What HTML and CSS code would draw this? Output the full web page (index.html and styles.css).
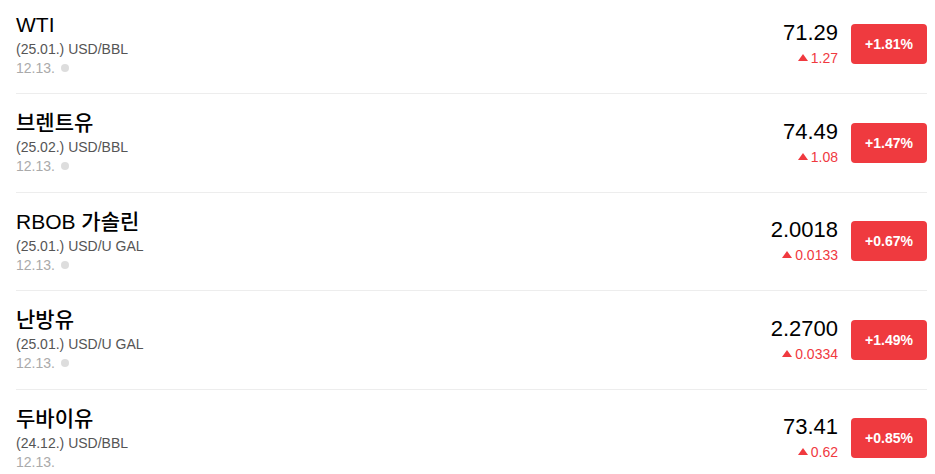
FILE: index.html
```html
<!DOCTYPE html>
<html lang="ko">
<head>
<meta charset="utf-8">
<title>원자재 시세</title>
<link rel="stylesheet" href="styles.css">
</head>
<body>
<ul class="list">
  <li class="row">
    <div class="info">
      <div class="title">WTI</div>
      <div class="sub">(25.01.) USD/BBL</div>
      <div class="date">12.13. <span class="dot"></span></div>
    </div>
    <div class="quote">
      <div class="price">71.29</div>
      <div class="change"><span class="tri"></span>1.27</div>
    </div>
    <div class="badge">+1.81%</div>
  </li>
  <li class="row">
    <div class="info">
      <div class="title"><span class="ko">브렌트유</span></div>
      <div class="sub">(25.02.) USD/BBL</div>
      <div class="date">12.13. <span class="dot"></span></div>
    </div>
    <div class="quote">
      <div class="price">74.49</div>
      <div class="change"><span class="tri"></span>1.08</div>
    </div>
    <div class="badge">+1.47%</div>
  </li>
  <li class="row">
    <div class="info">
      <div class="title">RBOB <span class="ko">가솔린</span></div>
      <div class="sub">(25.01.) USD/U GAL</div>
      <div class="date">12.13. <span class="dot"></span></div>
    </div>
    <div class="quote">
      <div class="price">2.0018</div>
      <div class="change"><span class="tri"></span>0.0133</div>
    </div>
    <div class="badge">+0.67%</div>
  </li>
  <li class="row">
    <div class="info">
      <div class="title"><span class="ko">난방유</span></div>
      <div class="sub">(25.01.) USD/U GAL</div>
      <div class="date">12.13. <span class="dot"></span></div>
    </div>
    <div class="quote">
      <div class="price">2.2700</div>
      <div class="change"><span class="tri"></span>0.0334</div>
    </div>
    <div class="badge">+1.49%</div>
  </li>
  <li class="row">
    <div class="info">
      <div class="title"><span class="ko">두바이유</span></div>
      <div class="sub">(24.12.) USD/BBL</div>
      <div class="date">12.13.</div>
    </div>
    <div class="quote">
      <div class="price">73.41</div>
      <div class="change"><span class="tri"></span>0.62</div>
    </div>
    <div class="badge">+0.85%</div>
  </li>
</ul>
</body>
</html>
```
FILE: styles.css
```css
html, body {
  margin: 0;
  padding: 0;
  background: #fff;
}
body {
  font-family: "Liberation Sans", "Noto Sans CJK KR", Arial, sans-serif;
  color: #111;
  overflow: hidden;
}
.list {
  list-style: none;
  margin: -4.5px 0 0 16px;
  padding: 0;
  width: 911px;
}
.row {
  display: flex;
  align-items: center;
  height: 97.5px;
  border-bottom: 1px solid #ededed;
}
.info {
  flex: 1;
  padding-bottom: 1px;
}
.title {
  font-size: 21px;
  line-height: 30px;
  color: #000;
}
.ko {
  font-weight: 500;
}
.sub {
  font-size: 14px;
  line-height: 19px;
  color: #555;
}
.date {
  font-size: 14px;
  line-height: 19px;
  color: #aaa;
}
.dot {
  display: inline-block;
  width: 8px;
  height: 8px;
  border-radius: 50%;
  background: #ddd;
  margin-left: 2px;
  vertical-align: 1px;
}
.quote {
  text-align: right;
  padding-bottom: 2px;
  margin-right: 13px;
}
.price {
  font-size: 22px;
  line-height: 30px;
  color: #000;
}
.change {
  font-size: 14px;
  line-height: 20px;
  color: #f0393f;
}
.tri {
  display: inline-block;
  width: 0;
  height: 0;
  border-left: 5px solid transparent;
  border-right: 5px solid transparent;
  border-bottom: 7px solid #f0393f;
  margin-right: 3px;
  vertical-align: 2px;
}
.badge {
  width: 76px;
  height: 40px;
  border-radius: 4px;
  background: #ef3a3f;
  color: #fff;
  font-size: 14px;
  font-weight: bold;
  display: flex;
  align-items: center;
  justify-content: center;
}
```
